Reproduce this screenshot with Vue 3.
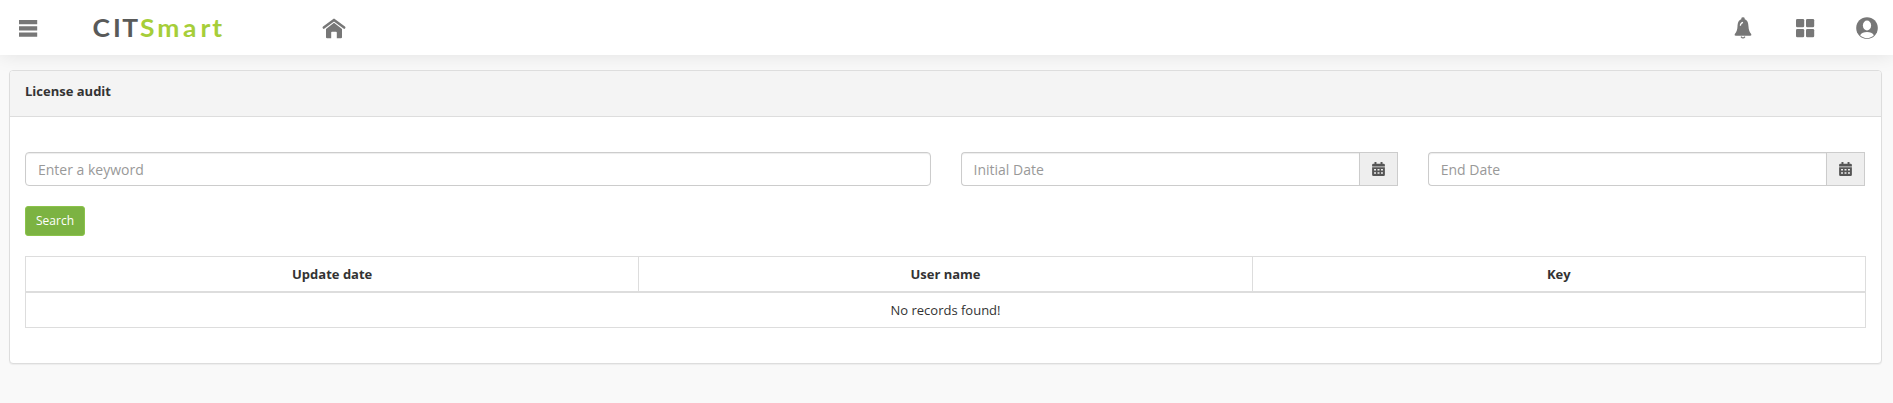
<script setup>
const columns = ['Update date', 'User name', 'Key']
const dates = ['Initial Date', 'End Date']
</script>

<template>
  <div class="page">
    <header class="topbar">
      <svg class="menu" width="20" height="18" viewBox="0 0 20 18"><path d="M1 0h18.200v4.300H1zM1 6.200h18.200v4.300H1zM1 12.400h18.200v4.300H1z" /></svg>
      <svg class="logo" width="134" height="24" viewBox="0 0 134 24">
        <g transform="scale(1.1 1)">
          <text y="18.800" class="dark" x="0.500 19 27.600">CIT</text>
          <text y="18.800" class="green" x="43.600 59.400 82.800 98.600 109.400">Smart</text>
        </g>
      </svg>
      <svg class="home" width="24" height="21" viewBox="0 0 24 21">
        <path d="M1.800 9.600 12 1.900 22.200 9.600" fill="none" stroke="#777" stroke-width="2.500" stroke-linecap="round" stroke-linejoin="round" />
        <path d="M12 4.800 20 11v8.200q0 1.100-1.100 1.100H14.800v-5.800q0-.8-.8-.8h-4q-.8 0-.8.8v5.800H5.100Q4 20.300 4 19.200V11z" />
      </svg>
      <nav class="tools">
        <svg class="bell" width="18" height="22" viewBox="0 0 18 22">
          <path d="M7.300 2.300V1.500Q7.300.3 9 .3t1.700 1.200v.8C14 3.300 14.300 7 14.500 9.500c.2 3.200.8 5.200 2.500 7.200.7 1 .4 2-.8 2H1.800c-1.200 0-1.500-1-.8-2 1.700-2 2.300-4 2.500-7.200C3.700 7 4 3.300 7.300 2.300z" />
          <path d="M6.400 8.800C6.400 7 7.200 5.800 9 5.300" fill="none" stroke="#fff" stroke-width="1.200" />
          <path d="M7 19.700q2 2.600 4 0" fill="none" stroke="#777" stroke-width="1.200" />
        </svg>
        <svg class="grid" width="20" height="20" viewBox="0 0 20 20"><rect x="1" y="1" width="8.200" height="8.200" rx="1.300" /><rect x="11" y="1" width="8.200" height="8.200" rx="1.300" /><rect x="1" y="11" width="8.200" height="8.200" rx="1.300" /><rect x="11" y="11" width="8.200" height="8.200" rx="1.300" /></svg>
        <svg class="user" width="22" height="22" viewBox="0 0 22 22">
          <circle cx="11" cy="11" r="10.800" />
          <ellipse cx="11" cy="8.500" rx="4.100" ry="4.900" fill="#fff" />
          <path d="M4.100 18.200C5.300 16 8 15.100 11 15.100s5.700.9 6.900 3.100C16 20.100 13.600 21 11 21s-5-.9-6.900-2.800z" fill="#fff" />
        </svg>
      </nav>
    </header>
    <main class="panel">
      <div class="heading">License audit</div>
      <div class="body">
        <div class="filters">
          <input class="control" placeholder="Enter a keyword" />
          <div v-for="label in dates" :key="label" class="group">
            <input class="control" :placeholder="label" />
            <button class="addon" :aria-label="label">
              <svg width="13" height="14" viewBox="0 0 12 14" preserveAspectRatio="none">
                <path fill-rule="evenodd" d="M2.300 0h1.800v1.700h3.800V0h1.800v1.700h1q1.200 0 1.200 1.200v1.600H.1V2.900q0-1.200 1.200-1.200h1zM.1 5.300h11.800v7.400q0 1.200-1.200 1.200H1.300Q.1 13.900.1 12.700zM1.900 7v1.500h1.800V7zM5.100 7v1.500h1.800V7zM8.300 7v1.500h1.800V7zM1.900 10.200v1.500h1.800v-1.500zM5.100 10.200v1.500h1.800v-1.500zM8.300 10.200v1.500h1.800v-1.500z" />
              </svg>
            </button>
          </div>
        </div>
        <button class="search">Search</button>
        <table>
          <thead><tr><th v-for="c in columns" :key="c">{{ c }}</th></tr></thead>
          <tbody><tr><td colspan="3">No records found!</td></tr></tbody>
        </table>
      </div>
    </main>
  </div>
</template>

<style>
body { background: #f9f9f9; }
</style>
<style scoped>
* { box-sizing: border-box; }
.page { height: 403px; overflow: hidden; background: #f9f9f9; font: 13px/18.57px "Open Sans", sans-serif; color: #333; }
svg { display: block; fill: #777; flex: none; }
.topbar { height: 55px; display: flex; align-items: flex-start; background: #fff; box-shadow: 0 0 20px rgba(0, 0, 0, .1); padding: 0 15px 0 18px; }
.menu { margin-top: 20px; }
.logo { margin: 18px 0 0 54px; font: 700 24px Lato, sans-serif; overflow: visible; }
.dark { fill: #595a59; }
.green { fill: #a6ce39; }
.home { margin: 18px 0 0 96px; }
.tools { margin: 17px 0 0 auto; display: flex; align-items: flex-start; }
.grid { margin: 1px 0 0 43px; }
.user { margin-left: 41px; }
.panel { margin: 15px 11px 0 9px; height: 294px; background: #fff; border: 1px solid #ddd; border-radius: 4px; box-shadow: 0 1px 1px rgba(0, 0, 0, .05); }
.heading { height: 46px; padding: 11px 15px; background: #f4f4f4; border-bottom: 1px solid #ddd; border-radius: 3px 3px 0 0; font-weight: 700; }
.body { padding: 35px 15px 0; }
.filters { display: grid; grid-template-columns: 905.500px 437.250px 437.250px; gap: 30px; }
.control { width: 100%; min-width: 0; height: 34px; border: 1px solid #ccc; border-radius: 4px; padding: 6px 12px; background: #fff; font: 14px/20px "Open Sans", sans-serif; box-shadow: inset 0 1px 1px rgba(0, 0, 0, .075); }
.control::placeholder { color: #999; opacity: 1; }
.group { display: flex; }
.group .control { flex: 1; border-radius: 4px 0 0 4px; border-right: 0; }
.addon { width: 39px; height: 34px; padding: 0 0 1px; border: 1px solid #ccc; background: #eee; display: flex; align-items: center; justify-content: center; }
.addon svg { fill: #555; }
.search { display: block; width: 60px; height: 30px; margin: 20px 0; padding: 0; border: 1px solid #8bc34a; border-radius: 3px; background: #7cb342; color: #fff; font: 12px/18px "Open Sans", sans-serif; }
table { width: 1841px; border-collapse: collapse; table-layout: fixed; border: 1px solid #ddd; }
th, td { height: 35px; padding: 8px; border: 1px solid #ddd; text-align: center; line-height: 18px; }
th { border-bottom-width: 2px; }
</style>
